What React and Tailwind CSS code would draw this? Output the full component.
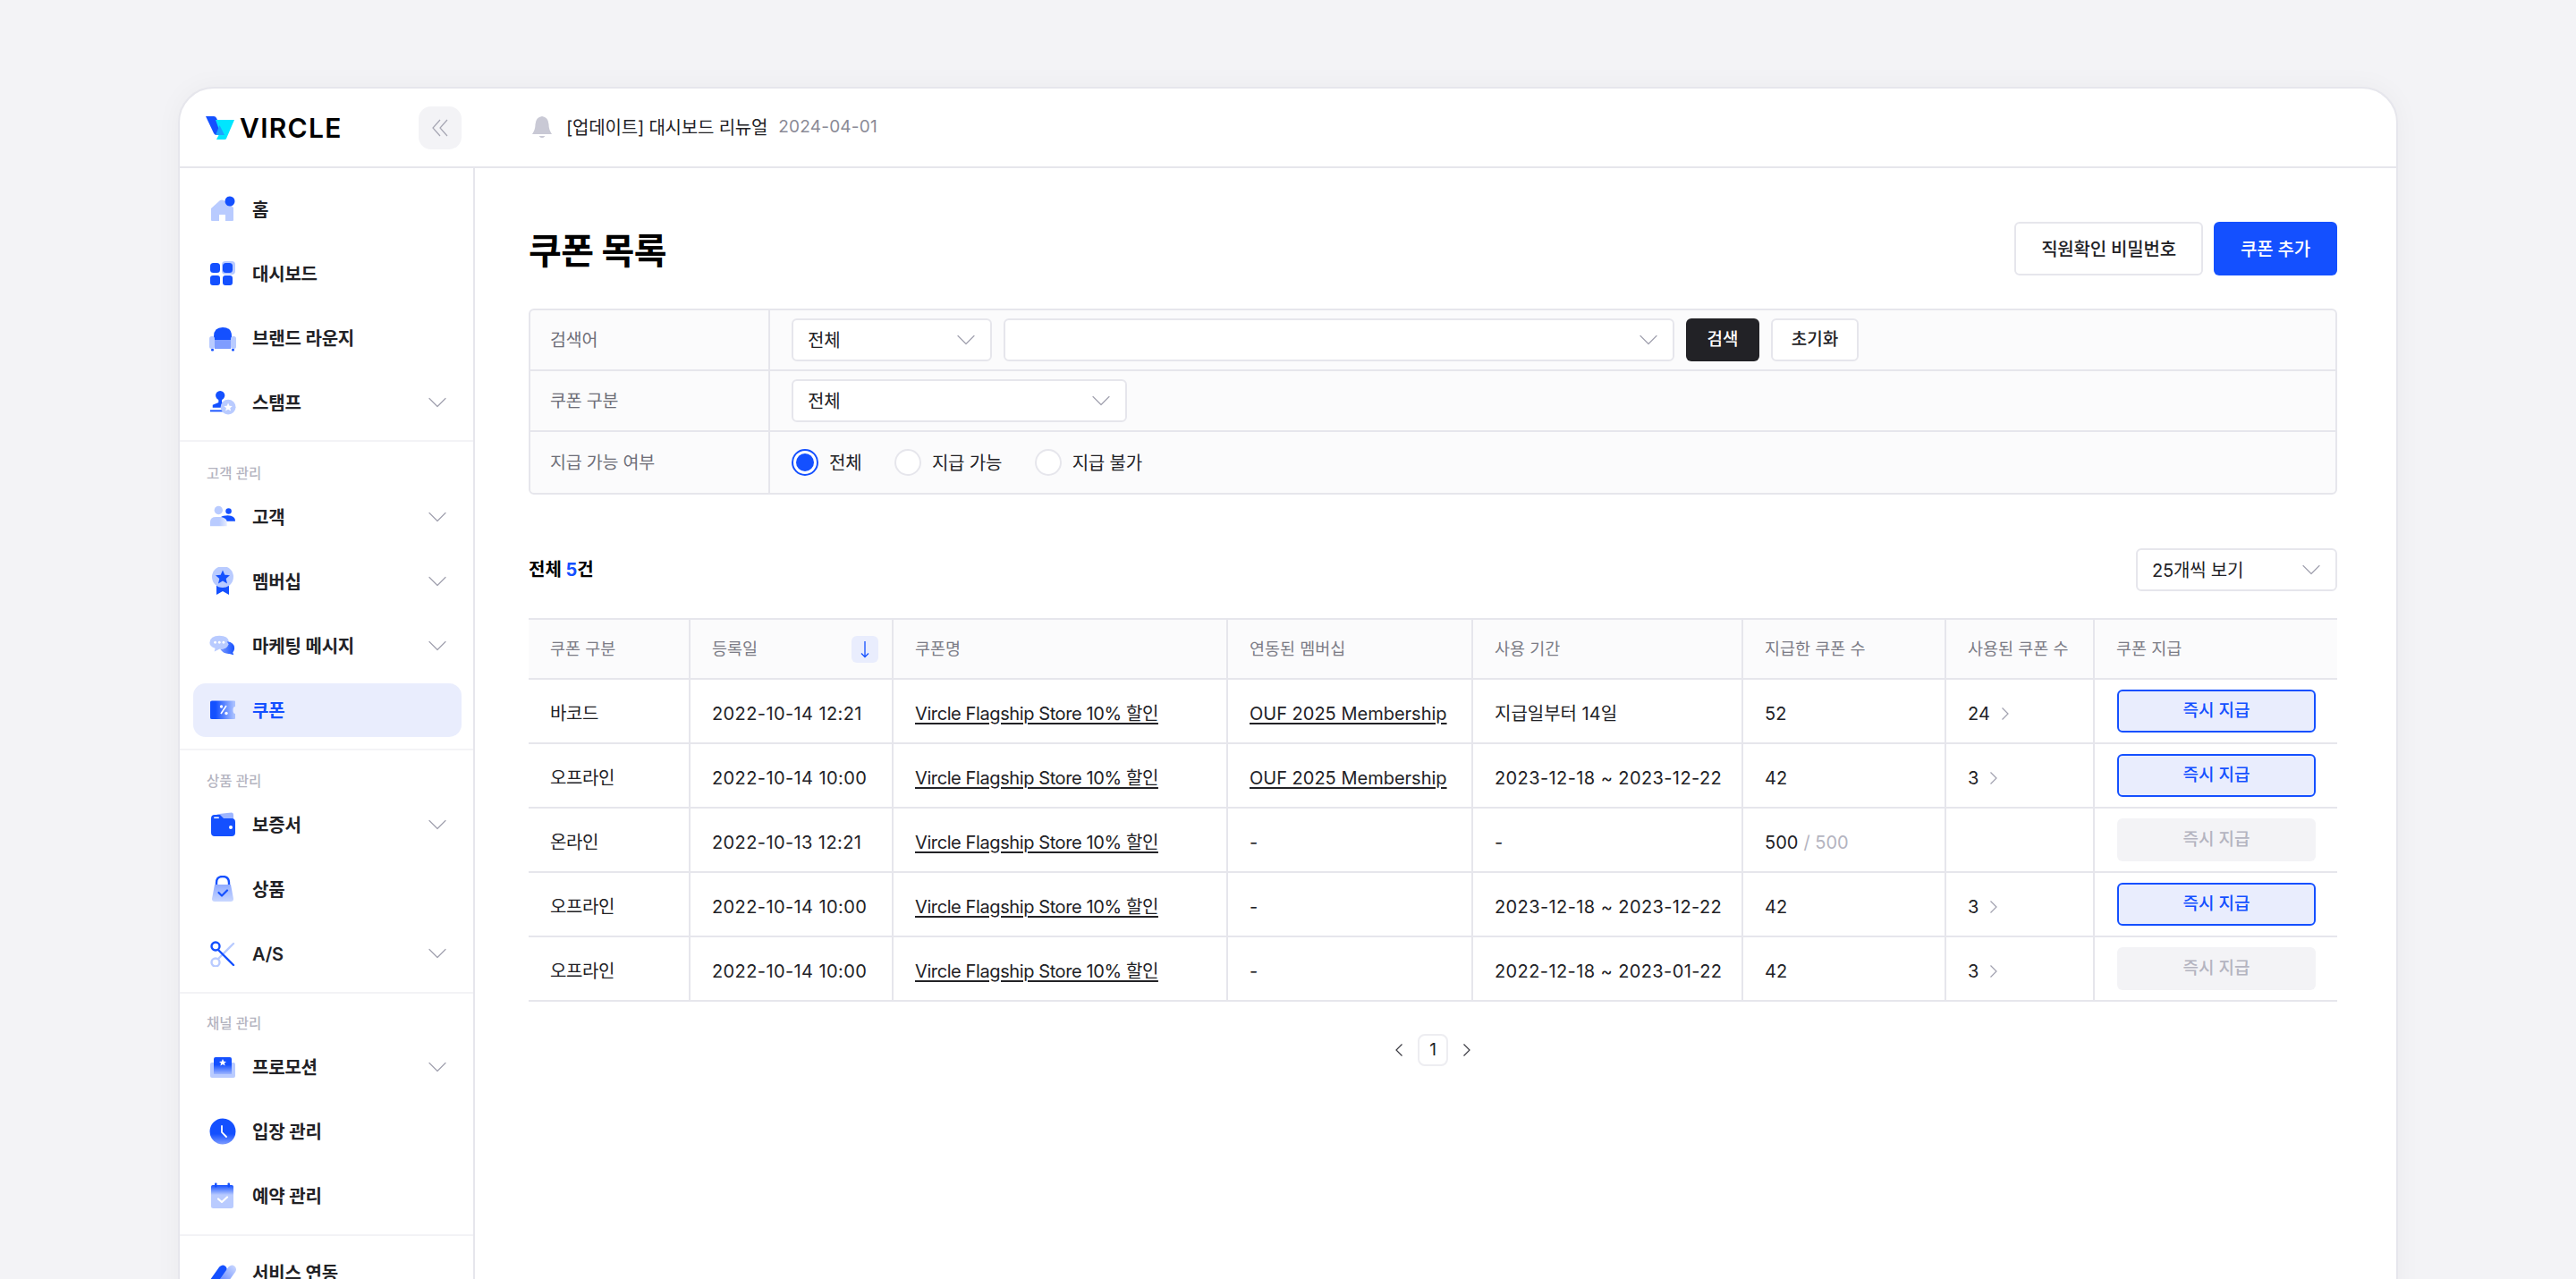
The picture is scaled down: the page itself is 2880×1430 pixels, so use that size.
import { ChevronDown } from "lucide-react";

const FONT = "font-['Inter','Noto_Sans_CJK_KR','Noto_Sans',sans-serif]";

const rows = [
    { type: "바코드", date: "2022-10-14 12:21", member: "OUF 2025 Membership", period: "지급일부터 14일", issued: "52", used: "24", active: true },
    { type: "오프라인", date: "2022-10-14 10:00", member: "OUF 2025 Membership", period: "2023-12-18 ~ 2023-12-22", issued: "42", used: "3", active: true },
    { type: "온라인", date: "2022-10-13 12:21", member: "-", period: "-", issued: "500", total: "500", used: "", active: false },
    { type: "오프라인", date: "2022-10-14 10:00", member: "-", period: "2023-12-18 ~ 2023-12-22", issued: "42", used: "3", active: true },
    { type: "오프라인", date: "2022-10-14 10:00", member: "-", period: "2022-12-18 ~ 2023-01-22", issued: "42", used: "3", active: false },
];

const columns = ["w-[181px]", "w-[227px]", "w-[374px]", "w-[274px]", "w-[302px]", "w-[227px]", "w-[166px]", "flex-1"];

function HomeIcon() {
    return (
        <svg width="30" height="30" viewBox="0 0 30 30">
            <path d="M2 14 L12 5 Q14 4 16 5 L27 13 V27 Q27 28 26 28 H18 V21 H11 V28 H3 Q2 28 2 27 Z" fill="#B9CBFF" />
            <circle cx="23" cy="6" r="5.5" fill="#1450FF" />
        </svg>
    );
}

function DashIcon() {
    return (
        <svg width="30" height="30" viewBox="0 0 30 30">
            <rect x="14" y="1" width="15" height="15" rx="4" fill="#B9CBFF" />
            <rect x="1" y="3" width="11" height="11" rx="3.5" fill="#1450FF" />
            <rect x="15" y="3" width="11" height="11" rx="3.5" fill="#1450FF" />
            <rect x="1" y="17" width="11" height="11" rx="3" fill="#1450FF" />
            <rect x="15" y="17" width="11" height="11" rx="3" fill="#1450FF" />
        </svg>
    );
}

function SofaIcon() {
    return (
        <svg width="30" height="30" viewBox="0 0 30 30">
            <path d="M5 18 V13 Q5 3 15 3 Q25 3 25 13 V18 Z" fill="#1450FF" />
            <rect x="0" y="13" width="6" height="14" rx="2.5" fill="#B9CBFF" />
            <rect x="24" y="13" width="6" height="14" rx="2.5" fill="#B9CBFF" />
            <rect x="6" y="17" width="18" height="10" fill="#7F9DFF" />
            <rect x="2" y="27" width="3" height="2.5" rx="1" fill="#1450FF" />
            <rect x="25" y="27" width="3" height="2.5" rx="1" fill="#1450FF" />
        </svg>
    );
}

function StampIcon() {
    return (
        <svg width="32" height="30" viewBox="0 0 32 30">
            <circle cx="13" cy="6.5" r="5.5" fill="#1450FF" />
            <path d="M11 10 H15 V15 L20 17 V21 H4 V18 L11 15 Z" fill="#1450FF" />
            <rect x="1" y="24" width="18" height="2" fill="#1450FF" />
            <circle cx="22.5" cy="20.5" r="9" fill="#B9CBFF" />
            <path d="M22.5 15.5 L24 19 L27.5 19.3 L24.8 21.6 L25.7 25 L22.5 23.2 L19.3 25 L20.2 21.6 L17.5 19.3 L21 19 Z" fill="#fff" />
        </svg>
    );
}

function UsersIcon() {
    return (
        <svg width="32" height="30" viewBox="0 0 32 30">
            <defs>
                <linearGradient id="usr" x1="0" x2="1">
                    <stop offset="0.55" stopColor="#B9CBFF" />
                    <stop offset="1" stopColor="#E7EDFF" />
                </linearGradient>
            </defs>
            <circle cx="11" cy="7" r="5" fill="#B9CBFF" />
            <path d="M1 26 V21 Q1 15 8 15 H14 Q21 15 21 21 V26 Z" fill="url(#usr)" />
            <circle cx="23" cy="8" r="3.5" fill="#1450FF" />
            <path d="M14 15 Q16 13 22 13 Q31 13 31 20 H21 Q20 16 14 15 Z" fill="#1450FF" />
        </svg>
    );
}

function MedalIcon() {
    return (
        <svg width="30" height="32" viewBox="0 0 30 32">
            <path d="M8 18 H22 V31 L15 27 L8 31 Z" fill="#1450FF" />
            <circle cx="15" cy="11" r="12" fill="#B9CBFF" />
            <path d="M15 3.5 L17.3 8.7 L23 9.2 L18.7 13 L20 18.5 L15 15.6 L10 18.5 L11.3 13 L7 9.2 L12.7 8.7 Z" fill="#1450FF" />
        </svg>
    );
}

function ChatIcon() {
    return (
        <svg width="32" height="30" viewBox="0 0 32 30">
            <defs>
                <linearGradient id="cht" x1="0" x2="1">
                    <stop offset="0" stopColor="#7F9DFF" />
                    <stop offset="1" stopColor="#1450FF" />
                </linearGradient>
            </defs>
            <path d="M12 3 Q23 3 23.5 11 Q23.5 19 12 19 L6 22 L7 18 Q0 16 0.5 11 Q1 3 12 3 Z" fill="#B9CBFF" />
            <path d="M21 10 Q30 11 30 18 Q30 21 28 23 L29 26 L24 24.5 Q17 25 13 19 Q21 19 23 13 Z" fill="url(#cht)" />
            <circle cx="7" cy="11" r="1.5" fill="#fff" />
            <circle cx="12" cy="11" r="1.5" fill="#fff" />
            <circle cx="17" cy="11" r="1.5" fill="#fff" />
        </svg>
    );
}

function CouponIcon() {
    return (
        <svg width="30" height="30" viewBox="0 0 30 30">
            <defs>
                <linearGradient id="cpn" x1="0" x2="1">
                    <stop offset="0.22" stopColor="#1450FF" />
                    <stop offset="0.95" stopColor="#A9C0FF" />
                </linearGradient>
            </defs>
            <path d="M1 6 Q1 4.5 3 4.5 H28 Q29 4.5 29 5.5 V11 Q26.5 11 26.5 15 Q26.5 19 29 19 V24 Q29 25 28 25 H3 Q1 25 1 23.5 Z" fill="url(#cpn)" />
            <path d="M19 10 L13 19" stroke="#fff" strokeWidth="1.6" />
            <circle cx="13.5" cy="11" r="1.7" fill="#fff" />
            <circle cx="19" cy="18.5" r="1.7" fill="#fff" />
        </svg>
    );
}

function WalletIcon() {
    return (
        <svg width="30" height="30" viewBox="0 0 30 30">
            <path d="M7 7 Q7 3 11 3 L25 1.5 Q27 1.5 27 4 V10 H7 Z" fill="#9DB5FF" />
            <path d="M2 8 Q2 4 6 4 H12 L16 8 H25 Q29 8 29 12 V24 Q29 28 25 28 H6 Q2 28 2 24 Z" fill="#1450FF" />
            <rect x="5" y="6.5" width="6" height="1.6" rx="0.8" fill="#fff" />
            <circle cx="24" cy="18" r="2" fill="#fff" />
        </svg>
    );
}

function BagIcon() {
    return (
        <svg width="30" height="30" viewBox="0 0 30 30">
            <defs>
                <linearGradient id="bag" x1="0" x2="0" y1="0" y2="1">
                    <stop offset="0" stopColor="#8FAAFF" />
                    <stop offset="1" stopColor="#C9D7FF" />
                </linearGradient>
            </defs>
            <path d="M8 11 V8 Q8 1 15 1 Q22 1 22 8 V11" fill="none" stroke="#1450FF" strokeWidth="2.4" />
            <path d="M6 10 H24 L27 26 Q27 29 24 29 H6 Q3 29 3 26 Z" fill="url(#bag)" />
            <path d="M10.5 19 L14 22.5 L20 16.5" fill="none" stroke="#1450FF" strokeWidth="2.2" strokeLinecap="round" strokeLinejoin="round" />
        </svg>
    );
}

function ScissorsIcon() {
    return (
        <svg width="30" height="30" viewBox="0 0 30 30">
            <circle cx="7" cy="25" r="4.5" fill="none" stroke="#B9CBFF" strokeWidth="2.4" />
            <path d="M10 21 L27 4" stroke="#B9CBFF" strokeWidth="2.4" strokeLinecap="round" />
            <circle cx="7" cy="7" r="4.5" fill="none" stroke="#1450FF" strokeWidth="2.4" />
            <path d="M10 11 L27 28" stroke="#1450FF" strokeWidth="2.4" strokeLinecap="round" />
        </svg>
    );
}

function MailIcon() {
    return (
        <svg width="30" height="30" viewBox="0 0 30 30">
            <defs>
                <linearGradient id="mail" x1="0" x2="0" y1="0" y2="1">
                    <stop offset="0.45" stopColor="#1450FF" />
                    <stop offset="1" stopColor="#9DB5FF" />
                </linearGradient>
            </defs>
            <rect x="1" y="10" width="28" height="17" rx="2" fill="#B9CBFF" />
            <path d="M5 6 Q5 4 7 4 H23 Q25 4 25 6 V23 H5 Z" fill="url(#mail)" />
            <path d="M15 6 L16.2 8.8 L19 9 L16.9 10.8 L17.6 13.5 L15 12.1 L12.4 13.5 L13.1 10.8 L11 9 L13.8 8.8 Z" fill="#fff" />
        </svg>
    );
}

function ClockIcon() {
    return (
        <svg width="30" height="30" viewBox="0 0 30 30">
            <defs>
                <linearGradient id="clk" x1="0" x2="0" y1="0" y2="1">
                    <stop offset="0.6" stopColor="#1450FF" />
                    <stop offset="1" stopColor="#7F9DFF" />
                </linearGradient>
            </defs>
            <circle cx="15" cy="15" r="14.5" fill="url(#clk)" />
            <path d="M14 9 V16 L19 21" fill="none" stroke="#fff" strokeWidth="1.8" strokeLinecap="round" />
        </svg>
    );
}

function CalendarIcon() {
    return (
        <svg width="30" height="30" viewBox="0 0 30 30">
            <defs>
                <linearGradient id="cal" x1="0" x2="0" y1="0" y2="1">
                    <stop offset="0" stopColor="#1450FF" />
                    <stop offset="1" stopColor="#B9CBFF" />
                </linearGradient>
            </defs>
            <rect x="2" y="3" width="25" height="26" rx="2.5" fill="#B9CBFF" />
            <path d="M2 5 Q2 3 4 3 H25 Q27 3 27 5 V14 H2 Z" fill="url(#cal)" />
            <rect x="6" y="0.5" width="2.5" height="5" rx="1" fill="#1450FF" />
            <rect x="20.5" y="0.5" width="2.5" height="5" rx="1" fill="#1450FF" />
            <path d="M10 18.5 L14 22 L20 16.5" fill="none" stroke="#fff" strokeWidth="2.2" strokeLinecap="round" strokeLinejoin="round" />
        </svg>
    );
}

function LinkIcon() {
    return (
        <svg width="32" height="30" viewBox="0 0 32 30">
            <defs>
                <linearGradient id="lnk" gradientUnits="userSpaceOnUse" x1="11" y1="26" x2="30" y2="8">
                    <stop offset="0" stopColor="#5F83FF" />
                    <stop offset="1" stopColor="#C4D3FF" />
                </linearGradient>
            </defs>
            <path d="M6 25 L16 11" stroke="#1450FF" strokeWidth="10" strokeLinecap="round" />
            <path d="M17 25 L27 11" stroke="url(#lnk)" strokeWidth="10" strokeLinecap="round" />
        </svg>
    );
}

function Logo() {
    return (
        <div className="flex items-center gap-[6px]">
            <svg width="32" height="28" viewBox="0 0 32 28">
                <path d="M0 1 H9 Q11 1 12 3 L21 22 H12 Q10 22 9 20 Z" fill="#1450FF" />
                <path d="M11 5 H32 L23 26 Q22.5 27 21 27 H12 L16 19 Z" fill="#00E6FF" />
                <path d="M15.5 11 L21 22 H12 L11.5 21 Z" fill="#1AA3FF" />
            </svg>
            <span className="text-[30px] font-semibold leading-none tracking-[1.3px] text-black">VIRCLE</span>
        </div>
    );
}

// thin chevrons, the lucide ones are too narrow here
function Caret({ dir, color }) {
    return (
        <svg width="10" height="14" viewBox="0 0 10 14" className={color}>
            <path d={dir === "left" ? "M8.5 0.5 L2 7 L8.5 13.5" : "M1.5 0.5 L8 7 L1.5 13.5"} fill="none" stroke="currentColor" strokeWidth="1.2" />
        </svg>
    );
}

function NavItem({ icon, label, chevron, active }) {
    return (
        <div className={`flex h-[60px] items-center rounded-[14px] pr-[9px] pl-[18px] ${active ? "bg-[#E9EDFD]" : ""}`}>
            <span className="flex w-[30px] justify-center">{icon}</span>
            <span className={`ml-[18px] flex-1 pt-[2px] text-[20px] font-semibold tracking-[-0.2px] ${active ? "text-[#1450FF]" : "text-[#222226]"}`}>
                {label}
            </span>
            {chevron && <ChevronDown size={36} strokeWidth={0.8} className="text-[#a0a0ae]" />}
        </div>
    );
}

function NavGroup({ title, children, last, pad }) {
    return (
        <div className={`flex flex-col gap-3 pr-[13px] pl-[15px] ${pad} ${last ? "" : "border-b-2 border-[#F3F3F6]"}`}>
            {title && <div className="-mb-[7px] h-[26px] px-[15px] text-[15.5px] leading-[26px] font-medium text-[#B4B4C0]">{title}</div>}
            {children}
        </div>
    );
}

function Sidebar() {
    return (
        <aside className="w-[330px] shrink-0 border-r-2 border-[#E6E6EC]">
            <NavGroup pad="pt-[16px] pb-[12px]">
                <NavItem icon={<HomeIcon />} label="홈" />
                <NavItem icon={<DashIcon />} label="대시보드" />
                <NavItem icon={<SofaIcon />} label="브랜드 라운지" />
                <NavItem icon={<StampIcon />} label="스탬프" chevron />
            </NavGroup>
            <NavGroup title="고객 관리" pad="pt-[23px] pb-[13px]">
                <NavItem icon={<UsersIcon />} label="고객" chevron />
                <NavItem icon={<MedalIcon />} label="멤버십" chevron />
                <NavItem icon={<ChatIcon />} label="마케팅 메시지" chevron />
                <NavItem icon={<CouponIcon />} label="쿠폰" active />
            </NavGroup>
            <NavGroup title="상품 관리" pad="pt-[22px] pb-[13px]">
                <NavItem icon={<WalletIcon />} label="보증서" chevron />
                <NavItem icon={<BagIcon />} label="상품" />
                <NavItem icon={<ScissorsIcon />} label="A/S" chevron />
            </NavGroup>
            <NavGroup title="채널 관리" pad="pt-[21px] pb-[13px]">
                <NavItem icon={<MailIcon />} label="프로모션" chevron />
                <NavItem icon={<ClockIcon />} label="입장 관리" />
                <NavItem icon={<CalendarIcon />} label="예약 관리" />
            </NavGroup>
            <NavGroup last pad="pt-[11px]">
                <NavItem icon={<LinkIcon />} label="서비스 연동" />
            </NavGroup>
        </aside>
    );
}

function Select({ label, className }) {
    return (
        <div className={`flex h-12 items-center justify-between rounded-[6px] border-2 border-[#E6E6EC] bg-white pr-[9px] pl-4 ${className}`}>
            <span className="pt-[1px] text-[20px] tracking-[-0.2px] text-[#222226]">{label}</span>
            <ChevronDown size={36} strokeWidth={0.8} className="text-[#a0a0ae]" />
        </div>
    );
}

function Radio({ label, checked }) {
    return (
        <label className="flex items-center gap-3">
            <span className={`flex h-[30px] w-[30px] items-center justify-center rounded-full bg-white ${checked ? "border-2 border-[#1450FF]" : "border-2 border-[#E6E6EC]"}`}>
                {checked && <span className="h-5 w-5 rounded-full bg-[#1450FF]" />}
            </span>
            <span className="pt-[1px] text-[20px] tracking-[-0.2px] text-[#222226]">{label}</span>
        </label>
    );
}

function FilterRow({ label, children, last }) {
    return (
        <div className={`flex h-[68px] items-stretch ${last ? "" : "border-b-2 border-[#E6E6EC]"}`}>
            <div className="flex w-[268px] shrink-0 items-center border-r-2 border-[#E6E6EC] pt-[1px] pl-[22px] text-[19.5px] tracking-[-0.2px] text-[#6E6E78]">{label}</div>
            <div className="flex flex-1 items-center gap-[13px] pl-[24px]">{children}</div>
        </div>
    );
}

function Cell({ col, children, className }) {
    return <div className={`flex items-center border-r-2 border-[#E6E6EC] pt-[5px] pl-6 ${columns[col]} ${className || ""}`}>{children}</div>;
}

function CouponTable() {
    const headers = ["쿠폰 구분", "등록일", "쿠폰명", "연동된 멤버십", "사용 기간", "지급한 쿠폰 수", "사용된 쿠폰 수", "쿠폰 지급"];
    return (
        <div className="mt-[30px] border-t-2 border-[#E6E6EC]">
            <div className="flex h-[67px] border-b-2 border-[#E6E6EC] bg-[#FBFBFC]">
                {headers.map((h, i) => (
                    <div key={h} className={`flex items-center justify-between pr-[15px] pl-6 text-[18.5px] text-[#7C7C86] ${columns[i]} ${i < 7 ? "border-r-2 border-[#E6E6EC]" : ""}`}>
                        {h}
                        {i === 1 && (
                            <span className="flex h-[30px] w-[30px] items-center justify-center rounded-[6px] bg-[#E9EDFD]">
                                <svg width="20" height="22" viewBox="0 0 20 22" className="text-[#1450FF]">
                                    <path d="M10 2 V19.5 M6 15.5 L10 19.5 L14 15.5" fill="none" stroke="currentColor" strokeWidth="1.3" />
                                </svg>
                            </span>
                        )}
                    </div>
                ))}
            </div>
            {rows.map((r, idx) => (
                <div key={idx} className="flex h-[72px] border-b-2 border-[#E6E6EC] text-[20px] text-[#222226]">
                    <Cell col={0} className="tracking-[-0.4px]">{r.type}</Cell>
                    <Cell col={1} className="tracking-[0.4px]">{r.date}</Cell>
                    <Cell col={2}>
                        <span className="tracking-[-0.4px] underline underline-offset-[3px]">Vircle Flagship Store 10% 할인</span>
                    </Cell>
                    <Cell col={3}>
                        {r.member === "-" ? r.member : <span className="underline underline-offset-[3px]">{r.member}</span>}
                    </Cell>
                    <Cell col={4} className={r.period.startsWith("2") ? "tracking-[0.4px]" : ""}>{r.period}</Cell>
                    <Cell col={5}>
                        {r.issued}
                        {r.total && <span className="ml-[6px] text-[#B4B4C0]">/ {r.total}</span>}
                    </Cell>
                    <Cell col={6}>
                        {r.used && (
                            <>
                                {r.used}
                                <span className="ml-3">
                                    <Caret dir="right" color="text-[#a0a0ae]" />
                                </span>
                            </>
                        )}
                    </Cell>
                    <div className={`flex items-center pr-6 pl-[25px] ${columns[7]}`}>
                        <button
                            className={`h-12 w-full rounded-[6px] text-[19px] font-medium ${
                                r.active
                                    ? "border-2 border-[#1450FF] bg-[#E9EDFD] text-[#1450FF]"
                                    : "bg-[#F3F3F6] text-[#B4B4C0]"
                            }`}
                        >
                            즉시 지급
                        </button>
                    </div>
                </div>
            ))}
        </div>
    );
}

export default function App() {
    return (
        <div className={`h-screen overflow-hidden bg-[#F3F3F6] pt-[97px] pl-[199px] ${FONT}`}>
            <div className="h-[1400px] w-[2482px] rounded-t-[40px] border-2 border-[#E6E6EC] bg-white shadow-[0_0_30px_rgba(0,0,0,0.04)]">
                <header className="flex h-[89px] items-center border-b-2 border-[#E6E6EC]">
                    <div className="flex w-[330px] items-center justify-between pr-[15px] pl-[29px]">
                        <Logo />
                        <button className="flex h-12 w-12 items-center justify-center rounded-[14px] bg-[#F3F3F6]">
                            <svg width="18" height="20" viewBox="0 0 18 20" className="text-[#a5a5b2]">
                                <path d="M9 1 L1 10 L9 19 M17 1 L9 10 L17 19" fill="none" stroke="currentColor" strokeWidth="1.2" />
                            </svg>
                        </button>
                    </div>
                    <svg width="26" height="28" viewBox="0 0 26 28" className="ml-[62px]">
                        <path d="M13 1 Q6 2 5.5 10 Q5.5 16 2 21 H24 Q20.5 16 20.5 10 Q20 2 13 1 Z" fill="#C9C9D5" />
                        <path d="M9.5 23 Q13 27.5 16.5 23 Z" fill="#C9C9D5" />
                    </svg>
                    <span className="ml-[14px] text-[20px] tracking-[-0.2px] text-[#222226]">[업데이트] 대시보드 리뉴얼</span>
                    <span className="ml-3 text-[19px] tracking-[0.2px] text-[#8A8A96]">2024-04-01</span>
                </header>
                <div className="flex">
                    <Sidebar />
                    <main className="flex-1 pt-[60px] pr-[66px] pl-[60px]">
                        <div className="flex items-center justify-between">
                            <h1 className="h-[60px] pt-[3px] text-[40px] leading-[60px] font-bold tracking-[-0.5px] text-black">쿠폰 목록</h1>
                            <div className="flex gap-3">
                                <button className="h-[60px] w-[211px] rounded-[6px] border-2 border-[#E6E6EC] bg-white pt-[1px] text-[20px] font-medium tracking-[-0.2px] text-[#222226]">직원확인 비밀번호</button>
                                <button className="h-[60px] w-[138px] rounded-[6px] bg-[#1450FF] pt-[1px] text-[20px] font-medium tracking-[-0.2px] text-white">쿠폰 추가</button>
                            </div>
                        </div>
                        <div className="mt-[37px] rounded-[6px] border-2 border-[#E6E6EC] bg-[#FBFBFC]">
                            <FilterRow label="검색어">
                                <Select label="전체" className="w-[224px]" />
                                <div className="flex h-12 w-[750px] items-center justify-end rounded-[6px] border-2 border-[#E6E6EC] bg-white pr-[9px]">
                                    <ChevronDown size={36} strokeWidth={0.8} className="text-[#a0a0ae]" />
                                </div>
                                <button className="h-12 w-[82px] rounded-[6px] bg-[#222226] text-[19px] font-medium text-white">검색</button>
                                <button className="h-12 w-[98px] rounded-[6px] border-2 border-[#E6E6EC] bg-white text-[19px] font-medium text-[#222226]">초기화</button>
                            </FilterRow>
                            <FilterRow label="쿠폰 구분">
                                <Select label="전체" className="w-[375px]" />
                            </FilterRow>
                            <FilterRow label="지급 가능 여부" last>
                                <div className="flex items-center gap-[36.5px]">
                                    <Radio label="전체" checked />
                                    <Radio label="지급 가능" />
                                    <Radio label="지급 불가" />
                                </div>
                            </FilterRow>
                        </div>
                        <div className="mt-[60px] flex items-center justify-between">
                            <div className="text-[20px] font-bold text-black">
                                전체 <span className="text-[#1450FF]">5</span>건
                            </div>
                            <Select label="25개씩 보기" className="w-[225px]" />
                        </div>
                        <CouponTable />
                        <div className="mt-[36px] flex items-center justify-center gap-[16px]">
                            <Caret dir="left" color="text-[#3a3a42]" />
                            <span className="flex h-9 w-[34px] items-center justify-center rounded-[8px] border-2 border-[#EDEDF1] text-[19px] text-[#222226]">1</span>
                            <Caret dir="right" color="text-[#3a3a42]" />
                        </div>
                    </main>
                </div>
            </div>
        </div>
    );
}
